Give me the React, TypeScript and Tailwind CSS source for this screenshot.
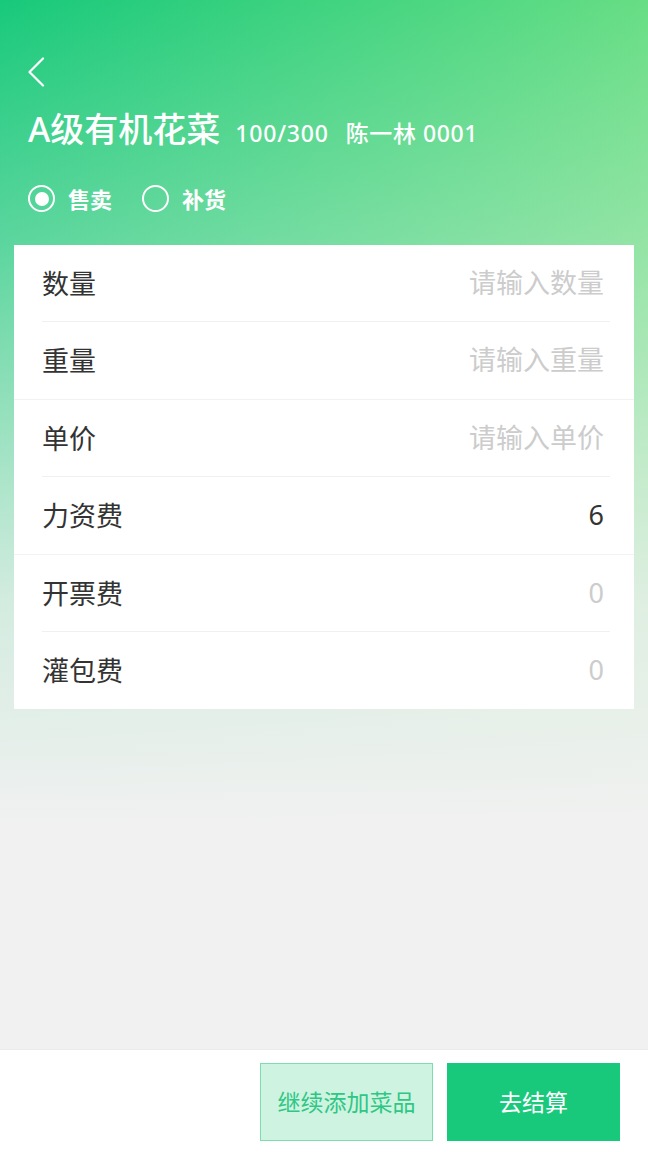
import React, { useState } from 'react';

type Field = { label: string; placeholder: string; value?: string };

const groups: Field[][] = [
  [
    { label: '数量', placeholder: '请输入数量' },
    { label: '重量', placeholder: '请输入重量' },
  ],
  [
    { label: '单价', placeholder: '请输入单价' },
    { label: '力资费', placeholder: '', value: '6' },
  ],
  [
    { label: '开票费', placeholder: '0' },
    { label: '灌包费', placeholder: '0' },
  ],
];

function Radio({ checked, label, onClick }: { checked: boolean; label: string; onClick: () => void }) {
  return (
    <button onClick={onClick} className="flex items-center gap-[13px]">
      <span className="w-[27px] h-[27px] rounded-full border-2 border-white flex items-center justify-center">
        {checked && <span className="w-[14px] h-[14px] rounded-full bg-white" />}
      </span>
      <span className="text-[22px] font-semibold text-white leading-none">{label}</span>
    </button>
  );
}

export default function App() {
  const [mode, setMode] = useState<'sell' | 'restock'>('sell');

  return (
    <div className="h-screen flex flex-col font-['Noto_Sans','Noto_Sans_CJK_SC',sans-serif] bg-[linear-gradient(to_bottom,rgba(241,241,241,0)_0px,rgba(241,241,241,0.3)_250px,rgba(241,241,241,0.85)_600px,#f1f1f1_830px),linear-gradient(100deg,#18c97b,#80e488)]">
      <div className="px-[28px] pt-[57px]">
        <button className="block -ml-[1px]">
          <svg width="18" height="30" viewBox="0 0 18 30" fill="none">
            <path d="M16 1.5 L2.5 15 L16 28.5" stroke="white" strokeWidth="2.2" strokeLinecap="round" strokeLinejoin="round" />
          </svg>
        </button>
        <div className="mt-[25px] flex items-baseline text-white">
          <span className="text-[34px] font-medium leading-none">A级有机花菜</span>
          <span className="ml-[15px] text-[23px] font-medium leading-none tracking-[0.8px]">100/300</span>
          <span className="ml-[17px] text-[23px] font-medium leading-none tracking-[0.6px]">陈一林 0001</span>
        </div>
        <div className="mt-[39px] flex items-center gap-[30px]">
          <Radio checked={mode === 'sell'} label="售卖" onClick={() => setMode('sell')} />
          <Radio checked={mode === 'restock'} label="补货" onClick={() => setMode('restock')} />
        </div>
      </div>

      <div className="mx-[14px] mt-[33px] bg-white">
        {groups.map((g, gi) => (
          <div key={gi} className={gi < groups.length - 1 ? 'border-b border-[#f2f2f2]' : ''}>
            {g.map((f, fi) => (
              <div key={f.label} className="pl-[28px] pr-[24px]">
                <div
                  className={`h-[77px] flex items-center justify-between ${fi === 0 ? 'border-b border-[#f0f0f0]' : ''}`}
                >
                  <span className="text-[27px] text-[#333333] leading-none">{f.label}</span>
                  <input
                    defaultValue={f.value}
                    placeholder={f.placeholder}
                    className="w-[260px] pr-[6px] text-right text-[27px] text-[#333333] placeholder:text-[#cccccc] outline-none bg-transparent"
                  />
                </div>
              </div>
            ))}
          </div>
        ))}
      </div>

      <div className="flex-1" />

      <div className="h-[103px] bg-white border-t border-[#ebebeb] flex justify-end items-start pt-[13px] pr-[28px] gap-[14px]">
        <button className="w-[173px] h-[78px] bg-[#cff3e1] border border-[#7edcb1] text-[#2ec784] text-[23px]">
          继续添加菜品
        </button>
        <button className="w-[173px] h-[78px] bg-[#19c97b] text-white text-[23px]">去结算</button>
      </div>
    </div>
  );
}
